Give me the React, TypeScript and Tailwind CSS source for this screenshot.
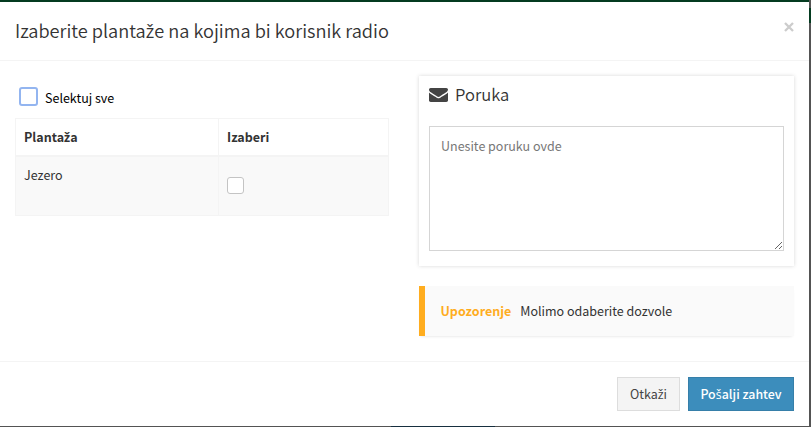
import React from "react";

const EnvelopeIcon = () => (
  <svg className="h-[14px] w-[19px] shrink-0" viewBox="0 256 1792 1408" preserveAspectRatio="none" fill="#444">
    <path d="M1792 710v794q0 66-47 113t-113 47h-1472q-66 0-113-47t-47-113v-794q44 49 101 87 362 246 497 345 57 42 92.500 65.500t94.500 48 110 24.500h2q51 0 110-24.500t94.500-48 92.500-65.500q170-123 498-345 57-39 100-87zm0-294q0 79-49 151t-122 123q-376 261-468 325-10 7-42.500 31t-54 38.800-52 33.200-57.500 27.800-50 9.200h-2q-23 0-50-9.200t-57.500-27.800-52-33.200-54-38.800-42.500-31q-91-64-262-182.500t-205-142.500q-62-42-117-115.500t-55-136.500q0-78 41.500-130t118.500-52h1472q65 0 112.500 47t47.500 113z" />
  </svg>
);

// The main face has no glyphs for letters with a caron, so these come from Open Sans.
const Caron = ({ children }: { children: string }) => (
  <span className="font-['Open_Sans','Noto_Sans',sans-serif] leading-none">{children}</span>
);

function PlantationTable() {
  return (
    <section className="w-[374px] pt-[11px]">
      <label className="flex h-[31px] items-start pl-[4px] text-black">
        <input type="checkbox" className="size-[19px] shrink-0 appearance-none rounded-[3px] border-2 border-[#93b5f0] bg-white" />
        <span className="ml-[7px] mt-[1px] leading-5">Selektuj sve</span>
      </label>
      <div className="grid h-[98px] grid-cols-[203px_169px] grid-rows-[38px_58px] border border-[#f4f4f4]">
        <div className="border-r border-b-2 border-[#f4f4f4] pl-2 pt-2 font-bold leading-5">Planta<Caron>ž</Caron>a</div>
        <div className="border-b-2 border-[#f4f4f4] pl-2 pt-2 font-bold leading-5">Izaberi</div>
        <div className="border-r border-[#f4f4f4] bg-[#f9f9f9] pl-2 pt-2 leading-5">Jezero</div>
        <div className="bg-[#f9f9f9] pl-2 pt-[20px]">
          <input type="checkbox" className="block size-[17px] appearance-none rounded-[3px] border border-[#c4c4c4] bg-white" />
        </div>
      </div>
    </section>
  );
}

function MessagePanel() {
  return (
    <section className="w-[375px]">
      <div className="h-[190px] bg-white px-[10px] pt-[9px] shadow-[0_0_4px_rgba(0,0,0,0.16)]">
        <h4 className="flex h-5 items-center text-[16.6px] font-[350] leading-5">
          <EnvelopeIcon />
          <span className="-mt-[3px] ml-[7px]">Poruka</span>
        </h4>
        <textarea
          placeholder="Unesite poruku ovde"
          className="mt-[21px] block h-[125px] w-[355px] resize border border-[#d5d5d5] bg-white px-[11px] py-[9px] leading-5 outline-none placeholder:text-[#777]"
        />
      </div>
      <div className="mt-[20px] flex h-[50px] items-center border-l-[6px] border-[#ffad1f] bg-[#fafafa] pl-[15.5px] shadow-[0_2px_3px_-2px_rgba(0,0,0,0.15)]">
        <b className="text-[#ffad1f]">Upozorenje</b>
        <span className="ml-[9px]">Molimo odaberite dozvole</span>
      </div>
    </section>
  );
}

function Dialog() {
  return (
    <div className="w-[809px] border-t-2 border-[#043b20] bg-white">
      <header className="flex h-[59px] items-start justify-between border-b border-[#f4f4f4] pl-[15px] pr-[15px]">
        <h3 className="mt-[15px] whitespace-nowrap text-[18.2px] leading-[26px] font-[350]">
          Izaberite planta<span className="font-normal"><Caron>ž</Caron></span>e na kojima bi korisnik radio
        </h3>
        <button aria-label="Zatvori" className="mt-[20px]">
          <svg className="size-[10px]" viewBox="0 0 10 10" stroke="#ccc" strokeWidth="2.3">
            <path d="M1 1l8 8M9 1L1 9" />
          </svg>
        </button>
      </header>
      <main className="flex h-[300px] justify-between px-[15px] pt-[15px]">
        <PlantationTable />
        <MessagePanel />
      </main>
      <footer className="flex h-[65px] justify-end gap-2 border-t border-[#f4f4f4] pr-[15px] pt-[15px]">
        <button className="h-[34px] w-[63px] border border-[#ddd] bg-[#f4f4f4] text-[#444]">Otka<Caron>ž</Caron>i</button>
        <button className="h-[34px] w-[106px] border border-[#367fa9] bg-[#3c8dbc] text-[12.4px] font-medium text-white">Po<Caron>š</Caron>alji zahtev</button>
      </footer>
      <div className="flex h-px bg-[#545454] pl-[391px]">
        <div className="h-px w-[104px] bg-[#172f3f]" />
      </div>
    </div>
  );
}

export default function App() {
  return (
    <div className="flex h-[427px] w-[811px] overflow-hidden bg-[#545454] font-['Noto_Sans_CJK_SC','Noto_Sans',sans-serif] text-[12.5px] text-[#333]">
      <Dialog />
      <div className="mt-[8px] h-[15px] w-[2px] bg-[#043b20]" />
    </div>
  );
}
